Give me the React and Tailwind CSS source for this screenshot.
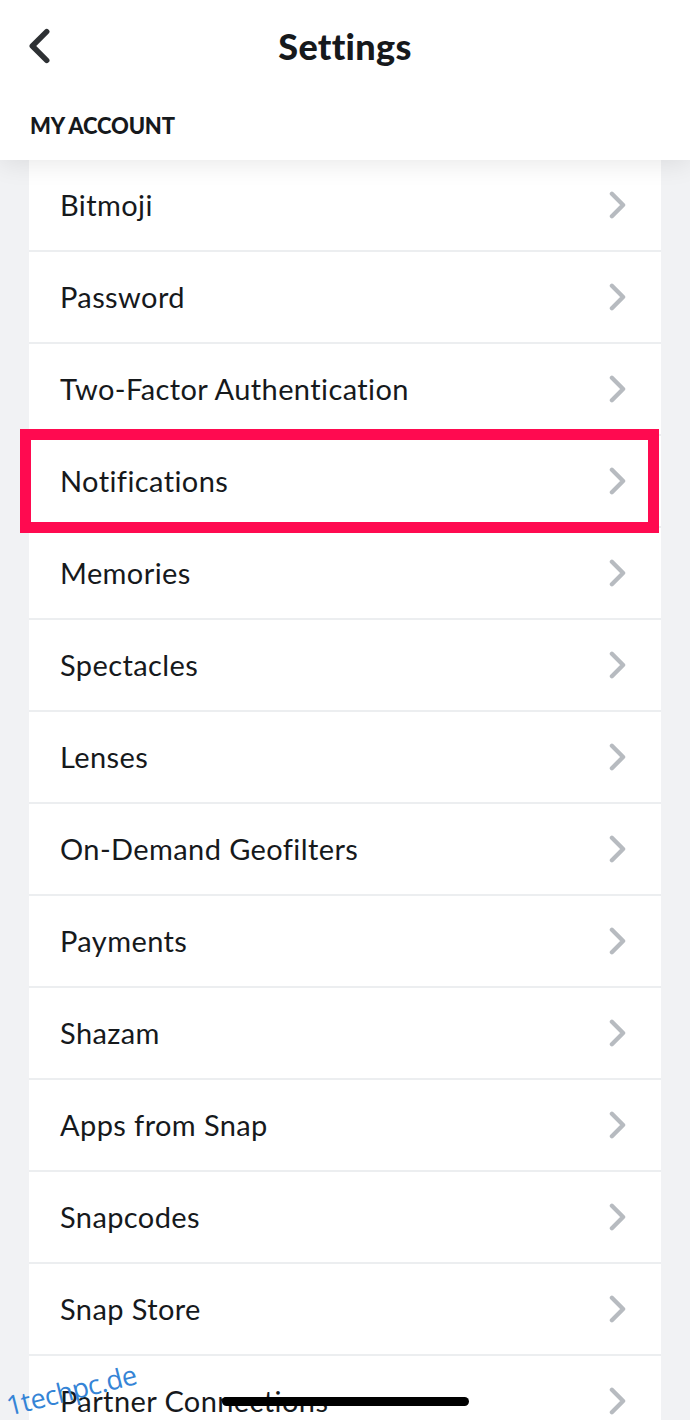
const items = [
  "Bitmoji",
  "Password",
  "Two-Factor Authentication",
  "Notifications",
  "Memories",
  "Spectacles",
  "Lenses",
  "On-Demand Geofilters",
  "Payments",
  "Shazam",
  "Apps from Snap",
  "Snapcodes",
  "Snap Store",
  "Partner Connections",
];

function Chevron({ className, flip }) {
  return (
    <svg viewBox="0 0 20 30" className={className} fill="none" stroke="currentColor" strokeWidth="4.6" strokeLinecap="round" strokeLinejoin="round">
      {flip ? <polyline points="16,3 4,15 16,27" /> : <polyline points="4,3 16,15 4,27" />}
    </svg>
  );
}

function Row({ label, highlighted }) {
  return (
    <div className="relative flex h-[92px] items-center justify-between border-b-2 border-[#eceef0] bg-white pl-[31px] pr-[34px]">
      <span className="text-[29px] tracking-[0.4px] text-[#16191c]">{label}</span>
      <Chevron className="h-[28px] w-[19px] text-[#b7bbc0]" />
      {highlighted && (
        <div className="absolute z-10 -top-[7px] -bottom-[7px] -left-[9px] right-[2px] border-[11px] border-[#ff0a50]" />
      )}
    </div>
  );
}

export default function App() {
  return (
    <div
      className="relative h-[1420px] w-[690px] overflow-hidden bg-[#f1f2f4]"
      style={{ fontFamily: "Lato, 'Open Sans', sans-serif" }}
    >
      <header className="relative z-20 flex h-[160px] flex-col bg-white shadow-[0_4px_24px_rgba(0,0,0,0.09)]">
        <div className="grid h-[92px] grid-cols-[80px_1fr_80px] items-center">
          <Chevron flip className="ml-[27px] mb-[1px] h-[36px] w-[25px] text-[#2e3134]" />
          <h1 className="text-center text-[36px] font-black tracking-[0.3px] text-[#16191c]">Settings</h1>
          <span />
        </div>
        <div className="pl-[30px] pt-[17px] text-[22px] font-black tracking-[-0.2px] text-[#16191c]">
          MY ACCOUNT
        </div>
      </header>

      <div className="mx-[29px] flex flex-col">
        {items.map((label) => (
          <Row key={label} label={label} highlighted={label === "Notifications"} />
        ))}
      </div>

      <div className="absolute z-30 left-[222px] top-[1397px] h-[9px] w-[247px] rounded-full bg-black" />
      <div
        className="absolute z-30 left-[5px] top-[1370px] -rotate-[14deg] text-[27px] tracking-[-0.5px] text-[#3584d6]"
        style={{ fontFamily: "'Open Sans', sans-serif" }}
      >
        1techpc.de
      </div>
    </div>
  );
}
